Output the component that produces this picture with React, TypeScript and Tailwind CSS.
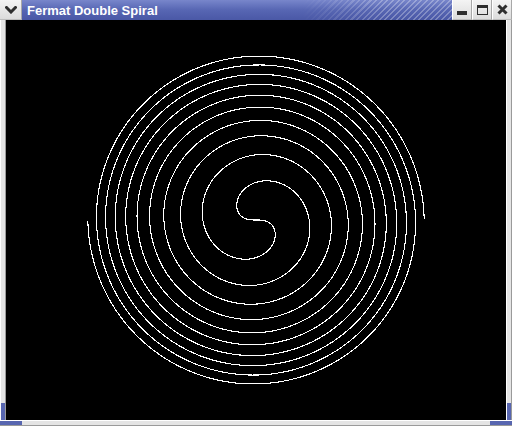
import React from 'react'

const buildSpiral = () => {
  // Fermat spiral r = a * sqrt(theta), both branches joined through the origin
  const a = 30
  const max = Math.PI * 10
  const cx = 250
  const cy = 200
  const outer: string[] = []
  const inner: string[] = []
  for (let t = 0; t <= max + 0.0001; t += 0.01) {
    const r = a * Math.sqrt(t)
    outer.push(`${(cx + r * Math.cos(t)).toFixed(2)},${(cy + r * Math.sin(t)).toFixed(2)}`)
    inner.push(`${(cx - r * Math.cos(t)).toFixed(2)},${(cy - r * Math.sin(t)).toFixed(2)}`)
  }
  return [...inner.reverse(), ...outer].join(' ')
}

const points = buildSpiral()

const FrameButton = ({ children }: { children: React.ReactNode }) => (
  <div className="w-[20px] h-[20px] flex items-center justify-center bg-gradient-to-b from-[#f4f4f4] to-[#dcdcdc] border-l border-l-[#ffffff] border-r border-r-[#a8a8a8] border-b border-b-[#bdbdbd]">
    {children}
  </div>
)

export default function App() {
  return (
    <div className="w-[512px] h-[426px] flex flex-col bg-[#e4e4e4] font-['Liberation_Sans',sans-serif] select-none">
      {/* Title bar */}
      <div className="h-[20px] flex">
        <div className="w-[22px] h-[20px] flex items-center justify-center bg-gradient-to-b from-[#f4f4f4] to-[#dcdcdc] border-r border-r-[#a8a8a8] border-b border-b-[#bdbdbd]">
          <svg width="12" height="8" viewBox="0 0 12 8">
            <path d="M1.5 1.5 L6 6 L10.5 1.5" fill="none" stroke="#2e2e2e" strokeWidth="3" strokeLinecap="square" />
          </svg>
        </div>
        <div className="relative flex-1 flex items-center bg-gradient-to-b from-[#7886cb] via-[#5766b3] to-[#4a58a6] overflow-hidden">
          <div className="absolute right-0 top-0 h-full w-[150px] bg-[repeating-linear-gradient(135deg,rgba(255,255,255,0.28)_0px,rgba(255,255,255,0.28)_1.5px,transparent_1.5px,transparent_4px)] [mask-image:linear-gradient(to_right,transparent,black_55%)]" />
          <span className="relative pl-[5px] text-white text-[13px] font-bold leading-none">
            Fermat Double Spiral
          </span>
        </div>
        <FrameButton>
          <div className="w-[10px] h-[4px] mt-[6px] bg-[#2e2e2e]" />
        </FrameButton>
        <FrameButton>
          <div className="w-[11px] h-[10px] border border-[#2e2e2e] border-t-[3px]" />
        </FrameButton>
        <FrameButton>
          <svg width="11" height="11" viewBox="0 0 11 11">
            <path d="M1.5 1.5 L9.5 9.5 M9.5 1.5 L1.5 9.5" stroke="#2e2e2e" strokeWidth="3" />
          </svg>
        </FrameButton>
      </div>

      {/* Body */}
      <div className="flex h-[400px]">
        <div className="w-[6px] flex flex-col border-l border-l-white border-r border-r-[#9a9a9a]">
          <div className="flex-1" />
          <div className="h-[17px] bg-[#5866b0]" />
        </div>
        <div className="w-[500px] h-[400px] bg-black">
          <svg width="500" height="400" viewBox="0 0 500 400" className="block">
            <polyline points={points} fill="none" stroke="white" strokeWidth="1.1" shapeRendering="crispEdges" />
          </svg>
        </div>
        <div className="w-[6px] flex flex-col border-l border-l-white border-r border-r-[#9a9a9a]">
          <div className="flex-1" />
          <div className="h-[17px] bg-[#5866b0]" />
        </div>
      </div>

      {/* Bottom border */}
      <div className="h-[6px] flex border-t border-t-white border-b border-b-[#9a9a9a]">
        <div className="w-[22px] bg-[#5866b0]" />
        <div className="flex-1" />
        <div className="w-[22px] bg-[#5866b0]" />
      </div>
    </div>
  )
}
